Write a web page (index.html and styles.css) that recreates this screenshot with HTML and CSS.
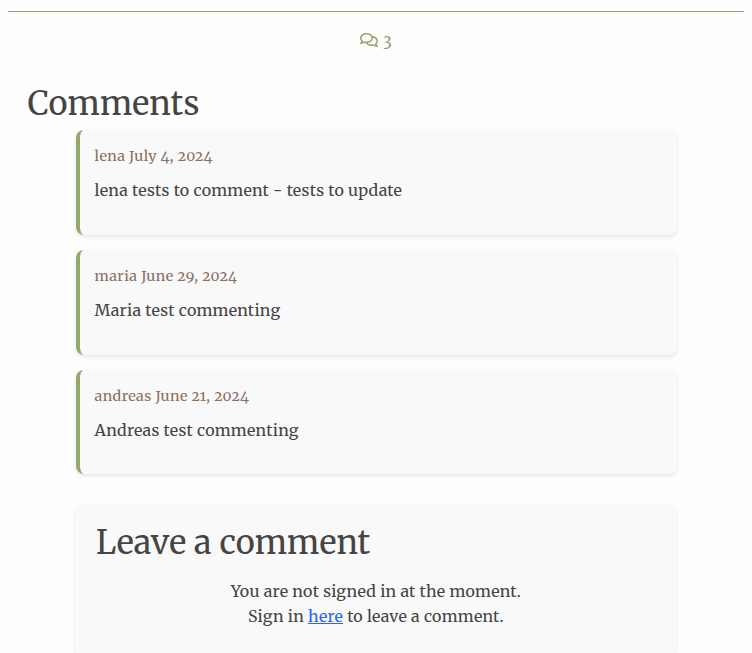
FILE: index.html
```
<!DOCTYPE html>
<html lang="en">
<head>
<meta charset="utf-8">
<title>Comments</title>
<link rel="stylesheet" href="styles.css">
</head>
<body>
<hr class="divider">
<div class="count">
  <svg class="count-icon" viewBox="0 0 576 512" aria-hidden="true"><path d="M532 386.2c27.5-27.1 44-61.1 44-98.2 0-80-76.5-146.1-176.2-157.9C368.3 72.5 294.3 32 208 32 93.1 32 0 103.6 0 192c0 37 16.5 71 44 98.2-15.3 30.7-37.3 54.5-37.7 54.9-6.3 6.7-8.1 16.5-4.4 25 3.6 8.5 12 14 21.2 14 53.5 0 96.7-20.2 125.2-38.8 9.2 2.1 18.7 3.7 28.4 4.9C208.1 407.6 281.8 448 368 448c20.8 0 40.8-2.4 59.8-6.8C456.3 459.7 499.4 480 553 480c9.2 0 17.5-5.5 21.2-14 3.6-8.5 1.9-18.3-4.4-25-.4-.3-22.5-24.1-37.8-54.8zm-392.8-92.3L122.1 305c-14.1 9.1-28.5 16.3-43.1 21.4 2.7-4.7 5.4-9.7 8-14.8l15.5-31.1L77.7 256C64.2 242.6 48 220.7 48 192c0-60.7 73.3-112 160-112s160 51.3 160 112-73.3 112-160 112c-16.5 0-33-1.9-49-5.6l-19.8-4.5zM498.3 352l-24.7 24.4 15.5 31.1c2.6 5.1 5.3 10.1 8 14.8-14.6-5.1-29-12.3-43.1-21.4l-17.1-11.1-19.9 4.6c-16 3.7-32.5 5.6-49 5.6-54 0-102.2-20.1-131.3-49.7C338 339.5 416 272.9 416 192c0-3.4-.4-6.7-.7-10C479.7 196.5 528 238.8 528 288c0 28.7-16.2 50.6-29.7 64z"/></svg>
  <span class="count-number">3</span>
</div>
<h3 class="title">Comments</h3>
<div class="comments">
  <article class="comment">
    <p class="meta">lena July 4, 2024</p>
    <p class="text">lena tests to comment - tests to update</p>
  </article>
  <article class="comment">
    <p class="meta">maria June 29, 2024</p>
    <p class="text">Maria test commenting</p>
  </article>
  <article class="comment">
    <p class="meta">andreas June 21, 2024</p>
    <p class="text">Andreas test commenting</p>
  </article>
</div>
<section class="form-card">
  <h3 class="form-title">Leave a comment</h3>
  <p class="notice">You are not signed in at the moment.<br>Sign in <a class="link" href="#">here</a> to leave a comment.</p>
</section>
</body>
</html>
```
FILE: styles.css
```
* { box-sizing: border-box; }
body {
  margin: 0;
  background: #fefefe;
  color: #454545;
  font-family: Merriweather, "DejaVu Serif Condensed", "DejaVu Serif", serif;
  font-weight: 400;
  font-variant-numeric: oldstyle-nums;
  font-size: 16px;
  letter-spacing: 0.24px;
  line-height: 25px;
}
h3, p { margin: 0; font-weight: 400; }
.divider { margin: 11px 8px 0; border: 0; height: 1px; background: #93a869; }
.count {
  display: flex;
  justify-content: center;
  align-items: center;
  gap: 5px;
  height: 26px;
  margin-top: 15px;
  color: #93a869;
}
.count-icon { width: 18px; height: 16px; margin-bottom: 1px; fill: currentColor; }
.title, .form-title { font-size: 32.5px; line-height: 42px; letter-spacing: 0.12px; }
.title { margin: 30px 0 0 27.6px; }
.comments {
  display: grid;
  gap: 15px;
  width: 601px;
  margin: 5px 0 0 75.6px;
}
.comment {
  height: 104.8px;
  padding: 14px 15px;
  border-left: 4px solid #93a869;
  border-radius: 8px;
  background: #f9f9f9;
  box-shadow: 0 2px 4px rgba(0, 0, 0, .1);
}
.meta { font-size: 14.4px; letter-spacing: 0.38px; color: #8d6e63; }
.text { margin-top: 9px; }
.form-card {
  width: 601px;
  height: 149px;
  margin: 29.4px 0 0 75.4px;
  padding: 18px 20.6px 0;
  border-radius: 8px 8px 0 0;
  background: #f9f9f9;
  box-shadow: 0 2px 4px rgba(0, 0, 0, .1);
}
.notice { margin-top: 15px; text-align: center; }
.link { color: #2f5fff; text-decoration: underline; }
```
